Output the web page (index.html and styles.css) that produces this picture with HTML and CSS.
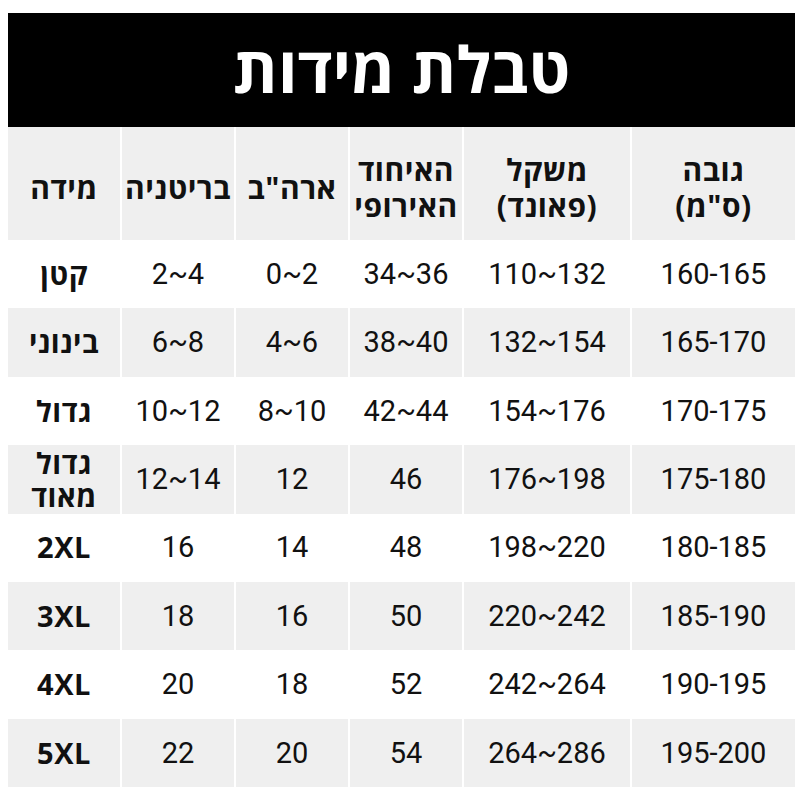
FILE: index.html
```html
<!DOCTYPE html>
<html lang="he" dir="rtl">
<head>
<meta charset="utf-8">
<link rel="stylesheet" href="styles.css">
</head>
<body>
<div class="chart">
  <div class="title">טבלת מידות</div>
  <div class="grid">
    <div class="cell head">גובה<br>(ס"מ)</div>
    <div class="cell head">משקל<br>(פאונד)</div>
    <div class="cell head">האיחוד<br>האירופי</div>
    <div class="cell head">ארה"ב</div>
    <div class="cell head">בריטניה</div>
    <div class="cell head">מידה</div>

    <div class="cell">160-165</div><div class="cell">110~132</div><div class="cell">34~36</div><div class="cell">0~2</div><div class="cell">2~4</div><div class="cell size">קטן</div>
    <div class="cell g">165-170</div><div class="cell g">132~154</div><div class="cell g">38~40</div><div class="cell g">4~6</div><div class="cell g">6~8</div><div class="cell g size">בינוני</div>
    <div class="cell">170-175</div><div class="cell">154~176</div><div class="cell">42~44</div><div class="cell">8~10</div><div class="cell">10~12</div><div class="cell size">גדול</div>
    <div class="cell g">175-180</div><div class="cell g">176~198</div><div class="cell g">46</div><div class="cell g">12</div><div class="cell g">12~14</div><div class="cell g size two">גדול<br>מאוד</div>
    <div class="cell">180-185</div><div class="cell">198~220</div><div class="cell">48</div><div class="cell">14</div><div class="cell">16</div><div class="cell size">2XL</div>
    <div class="cell g">185-190</div><div class="cell g">220~242</div><div class="cell g">50</div><div class="cell g">16</div><div class="cell g">18</div><div class="cell g size">3XL</div>
    <div class="cell">190-195</div><div class="cell">242~264</div><div class="cell">52</div><div class="cell">18</div><div class="cell">20</div><div class="cell size">4XL</div>
    <div class="cell g">195-200</div><div class="cell g">264~286</div><div class="cell g">54</div><div class="cell g">20</div><div class="cell g">22</div><div class="cell g size">5XL</div>
  </div>
</div>
</body>
</html>
```
FILE: styles.css
```css
html, body {
  margin: 0;
  padding: 0;
  background: #ffffff;
}
body {
  font-family: Roboto, "Open Sans", "DejaVu Sans", sans-serif;
  color: #111111;
}
.chart {
  margin: 13px 5px 0 8px;
  width: 787px;
}
.title {
  height: 114px;
  background: #000000;
  color: #ffffff;
  font-family: "Open Sans", "DejaVu Sans", sans-serif;
  font-weight: 700;
  font-size: 64px;
  display: flex;
  align-items: center;
  justify-content: center;
  line-height: 1;
  padding-bottom: 2px;
  box-sizing: border-box;
}
.grid {
  direction: rtl;
  display: grid;
  grid-template-columns: 163px 166px 112px 112px 112px 112px;
  column-gap: 2px;
  grid-template-rows: 113px;
  grid-auto-rows: 68.4px;
}
.cell {
  direction: ltr;
  display: flex;
  align-items: center;
  justify-content: center;
  text-align: center;
  font-size: 29px;
  line-height: 1.2;
}
.g, .head {
  background: #efefef;
}
.head {
  direction: rtl;
  font-family: "Open Sans", "DejaVu Sans", sans-serif;
  font-weight: 700;
  font-size: 30px;
  letter-spacing: 0.5px;
  line-height: 1.2;
  padding-top: 8px;
  box-sizing: border-box;
}
.size {
  direction: rtl;
  font-family: "Open Sans", "DejaVu Sans", sans-serif;
  font-weight: 700;
  font-size: 29px;
  letter-spacing: 0.5px;
}
.two {
  line-height: 1.15;
}
```
